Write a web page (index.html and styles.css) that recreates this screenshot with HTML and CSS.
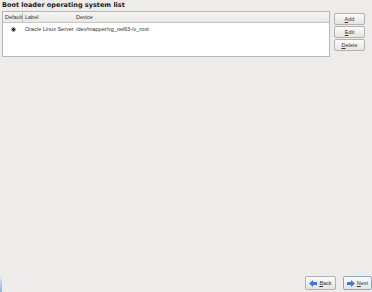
FILE: index.html
```html
<!DOCTYPE html>
<html lang="en">
<head>
    <meta charset="UTF-8">
    <title>Boot loader</title>
    <link rel="stylesheet" href="styles.css">
</head>
<body>
    <div class="page">
        <div class="title">Boot loader operating system list</div>
        <div class="list-area">
            <div class="table">
                <div class="thead">
                    <div class="th col-default">Default</div>
                    <div class="th col-label">Label</div>
                    <div class="th col-device">Device</div>
                </div>
                <div class="row">
                    <div class="td col-default"><span class="radio"></span></div>
                    <div class="td col-label">Oracle Linux Server</div>
                    <div class="td col-device">/dev/mapper/vg_oel63-lv_root</div>
                </div>
            </div>
            <div class="side-buttons">
                <button class="btn"><u>A</u>dd</button>
                <button class="btn"><u>E</u>dit</button>
                <button class="btn"><u>D</u>elete</button>
            </div>
        </div>
        <div class="spacer"></div>
        <div class="nav">
            <button class="btn nav-btn">
                <svg width="8" height="7" viewBox="0 0 8 7"><path d="M0 3.5 L4 0 V2 H8 V5 H4 V7 Z" fill="#3a7bd5"/></svg>
                <span><u>B</u>ack</span>
            </button>
            <button class="btn nav-btn next">
                <svg width="8" height="7" viewBox="0 0 8 7"><path d="M8 3.5 L4 0 V2 H0 V5 H4 V7 Z" fill="#3a7bd5"/></svg>
                <span><u>N</u>ext</span>
            </button>
        </div>
        <div class="edge"></div>
    </div>
</body>
</html>
```

FILE: styles.css
```css
* {
    margin: 0;
    padding: 0;
    box-sizing: border-box;
}

body {
    font-family: 'DejaVu Sans', sans-serif;
    background: #edeceb;
    color: #222;
    width: 372px;
    height: 292px;
    overflow: hidden;
}

.page {
    position: relative;
    height: 292px;
    display: flex;
    flex-direction: column;
    padding: 1px 0 0 2px;
}

.title {
    font-size: 6.5px;
    font-weight: bold;
    color: #1a1a1a;
    height: 10px;
    line-height: 8px;
}

.list-area {
    display: flex;
    gap: 4px;
}

.table {
    width: 328px;
    height: 46px;
    background: #fff;
    border: 1px solid #b8b6b2;
    font-family: 'Liberation Sans', sans-serif;
    font-size: 5.5px;
}

.thead {
    display: flex;
    height: 11px;
    background: linear-gradient(#f6f5f4, #e8e6e3);
    border-bottom: 1px solid #c8c6c2;
}

.th,
.td {
    white-space: nowrap;
    padding-left: 2px;
    color: #333;
}

.th {
    line-height: 10px;
}

.col-default {
    width: 20px;
    border-right: 1px solid #c8c6c2;
}

.col-label {
    width: 51px;
}

.col-device {
    flex: 1;
}

.row {
    display: flex;
    height: 12px;
    align-items: center;
}

.row .col-default {
    border: none;
    display: flex;
    justify-content: center;
    padding-left: 0;
}

.radio {
    width: 5px;
    height: 5px;
    border-radius: 50%;
    border: 1px solid #888;
    background: radial-gradient(circle, #222 0 1.3px, #fff 1.5px);
}

.side-buttons {
    display: flex;
    flex-direction: column;
    gap: 1px;
    padding-top: 2px;
}

.btn {
    font-family: 'Liberation Sans', sans-serif;
    font-size: 5.5px;
    color: #333;
    width: 31px;
    height: 12px;
    border: 1px solid #b4b2ae;
    border-radius: 2px;
    background: linear-gradient(#fbfbfa, #e6e4e1);
}

.spacer {
    flex: 1;
}

.nav {
    display: flex;
    justify-content: flex-end;
    gap: 7px;
    padding-bottom: 2px;
}

.nav-btn {
    height: 14px;
    width: 31px;
    display: flex;
    align-items: center;
    justify-content: center;
    gap: 2px;
}

.nav-btn.next {
    width: 29px;
    border-color: #8ea6c4;
}

.edge {
    position: absolute;
    left: 0;
    bottom: 0;
    width: 2px;
    height: 17px;
    background: linear-gradient(#e7edf4, #8fb0d6);
}
```
